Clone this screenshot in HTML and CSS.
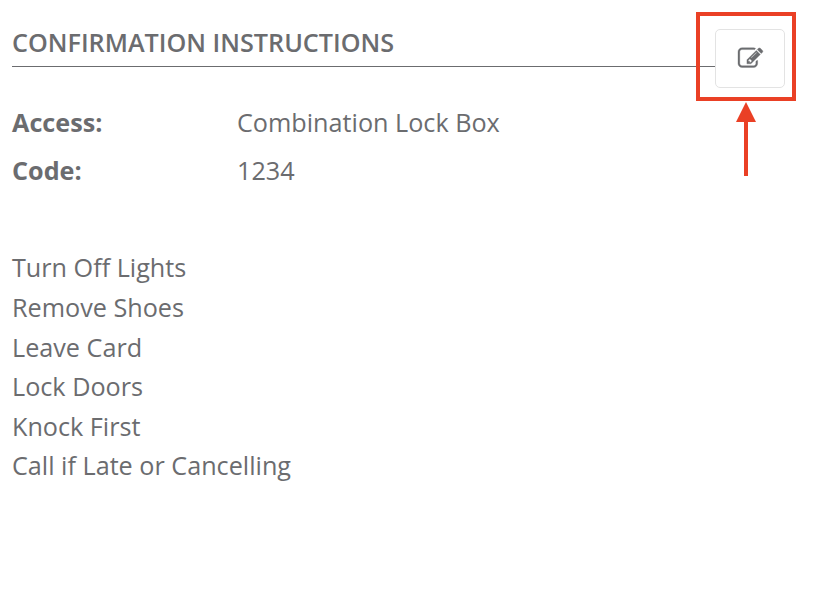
FILE: index.html
```html
<!DOCTYPE html>
<html lang="en">
<head>
<meta charset="utf-8">
<title>Confirmation Instructions</title>
<link rel="stylesheet" href="styles.css">
</head>
<body>
<main class="panel">
  <header class="panel-header">
    <h1 class="title">CONFIRMATION INSTRUCTIONS</h1>
    <button class="edit" aria-label="Edit">
      <svg class="edit-icon" viewBox="0 0 1792 1792"><path fill="currentColor" stroke="currentColor" stroke-width="24" d="M888 1184l116-116-152-152-116 116v56h96v96h56zm440-720q-16-16-33 1l-350 350q-17 17-1 33t33-1l350-350q17-17 1-33zm80 594v190q0 119-84.500 203.500t-203.500 84.500h-832q-119 0-203.500-84.500t-84.500-203.500v-832q0-119 84.500-203.500t203.500-84.500h832q63 0 117 25 15 7 18 23 3 17-9 29l-49 49q-14 14-32 8-23-6-45-6h-832q-66 0-113 47t-47 113v832q0 66 47 113t113 47h832q66 0 113-47t47-113v-126q0-13 9-22l64-64q15-15 35-7t20 29zm-96-738l288 288-672 672h-288v-288zm444 132l-92 92-288-288 92-92q28-28 68-28t68 28l152 152q28 28 28 68t-28 68z"/></svg>
    </button>
  </header>
  <dl class="details">
    <dt>Access:</dt><dd>Combination Lock Box</dd>
    <dt>Code:</dt><dd>1234</dd>
  </dl>
  <ul class="instructions">
    <li>Turn Off Lights</li>
    <li>Remove Shoes</li>
    <li>Leave Card</li>
    <li>Lock Doors</li>
    <li>Knock First</li>
    <li>Call if Late or Cancelling</li>
  </ul>
  <div class="highlight"></div>
  <svg class="arrow" viewBox="0 0 20 74"><path fill="#ea4025" d="M10 0L20 20H12V74H8V20H0z"/></svg>
</main>
</body>
</html>
```

FILE: styles.css
```css
* { box-sizing: border-box; }
body {
  margin: 0;
  background: #fff;
  color: #6b6c6f;
  font: 25.2px/39.6px "Open Sans", sans-serif;
}
.panel { position: relative; height: 604px; padding: 23px 35px 0 12px; }
.panel-header {
  position: relative;
  height: 44px;
  border-bottom: 1px solid #6b6c6f;
  width: 704px;
}
.title { margin: 0; font-size: 25.2px; line-height: 39px; font-weight: 600; white-space: nowrap; }
.edit {
  position: absolute;
  left: 703px;
  top: 6px;
  width: 70px;
  height: 59px;
  padding: 0;
  display: flex;
  align-items: center;
  justify-content: center;
  border: 1px solid #e3e3e3;
  border-radius: 5px;
  background: #fff;
  color: #6b6c6f;
}
.edit-icon { width: 25px; height: 25px; overflow: visible; }
.details { display: grid; grid-template-columns: 225px 1fr; grid-auto-rows: 48px; margin: 31px 0 0; line-height: 48px; }
.details dt { font-weight: 700; }
.details dd { margin: 0; }
.instructions { list-style: none; margin: 54.4px 0 0; padding: 0; }
.highlight { position: absolute; left: 696px; top: 12px; width: 100px; height: 89px; border: 4px solid #ea4025; }
.arrow { position: absolute; left: 736px; top: 102px; width: 20px; height: 74px; }
```
